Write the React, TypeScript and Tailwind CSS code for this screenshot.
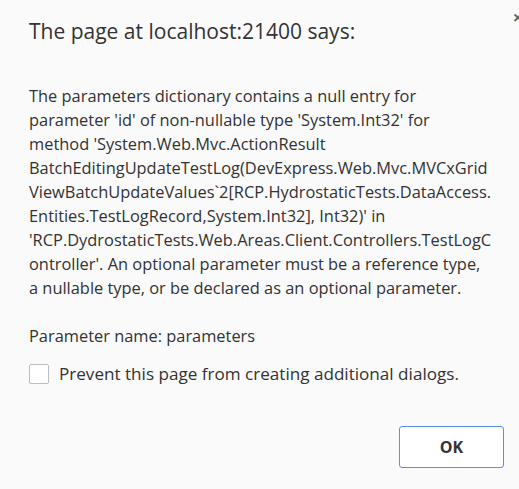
import React from 'react';

const lines = [
  'The parameters dictionary contains a null entry for',
  "parameter 'id' of non-nullable type 'System.Int32' for",
  "method 'System.Web.Mvc.ActionResult",
  'BatchEditingUpdateTestLog(DevExpress.Web.Mvc.MVCxGrid',
  'ViewBatchUpdateValues`2[RCP.HydrostaticTests.DataAccess.',
  "Entities.TestLogRecord,System.Int32], Int32)' in",
  "'RCP.DydrostaticTests.Web.Areas.Client.Controllers.TestLogC",
  "ontroller'. An optional parameter must be a reference type,",
  'a nullable type, or be declared as an optional parameter.',
];

const App: React.FC = () => {
  return (
    <div className="relative w-[519px] h-[489px] bg-[#fafafa] text-[#333] font-['Open_Sans',sans-serif] overflow-hidden">
      <span className="absolute right-[-4px] top-[8px] text-[18px] leading-none text-[#666] font-bold">×</span>

      <div className="pl-[29px] pr-[15px] pt-[18px]">
        <h1 className="text-[21px] leading-[26px] text-[#333]">The page at localhost:21400 says:</h1>

        <div className="mt-[40px] text-[16.4px] leading-[24px]">
          {lines.map((l, i) => (
            <div key={i} className="whitespace-nowrap">{l}</div>
          ))}
          <div className="mt-[24px]">Parameter name: parameters</div>
        </div>

        <label className="mt-[14px] flex items-center gap-[10px] text-[17.1px] leading-[24px]">
          <span className="w-[20px] h-[20px] rounded-[2px] border border-[#bdbdbd] bg-white shrink-0" />
          <span className="whitespace-nowrap">Prevent this page from creating additional dialogs.</span>
        </label>

        <div className="mt-[40px] flex justify-end">
          <button className="w-[105px] h-[42px] rounded-[3px] border border-[#5a8ff0] bg-white text-[16px] font-bold text-[#333]">
            OK
          </button>
        </div>
      </div>
    </div>
  );
};

export default App;
